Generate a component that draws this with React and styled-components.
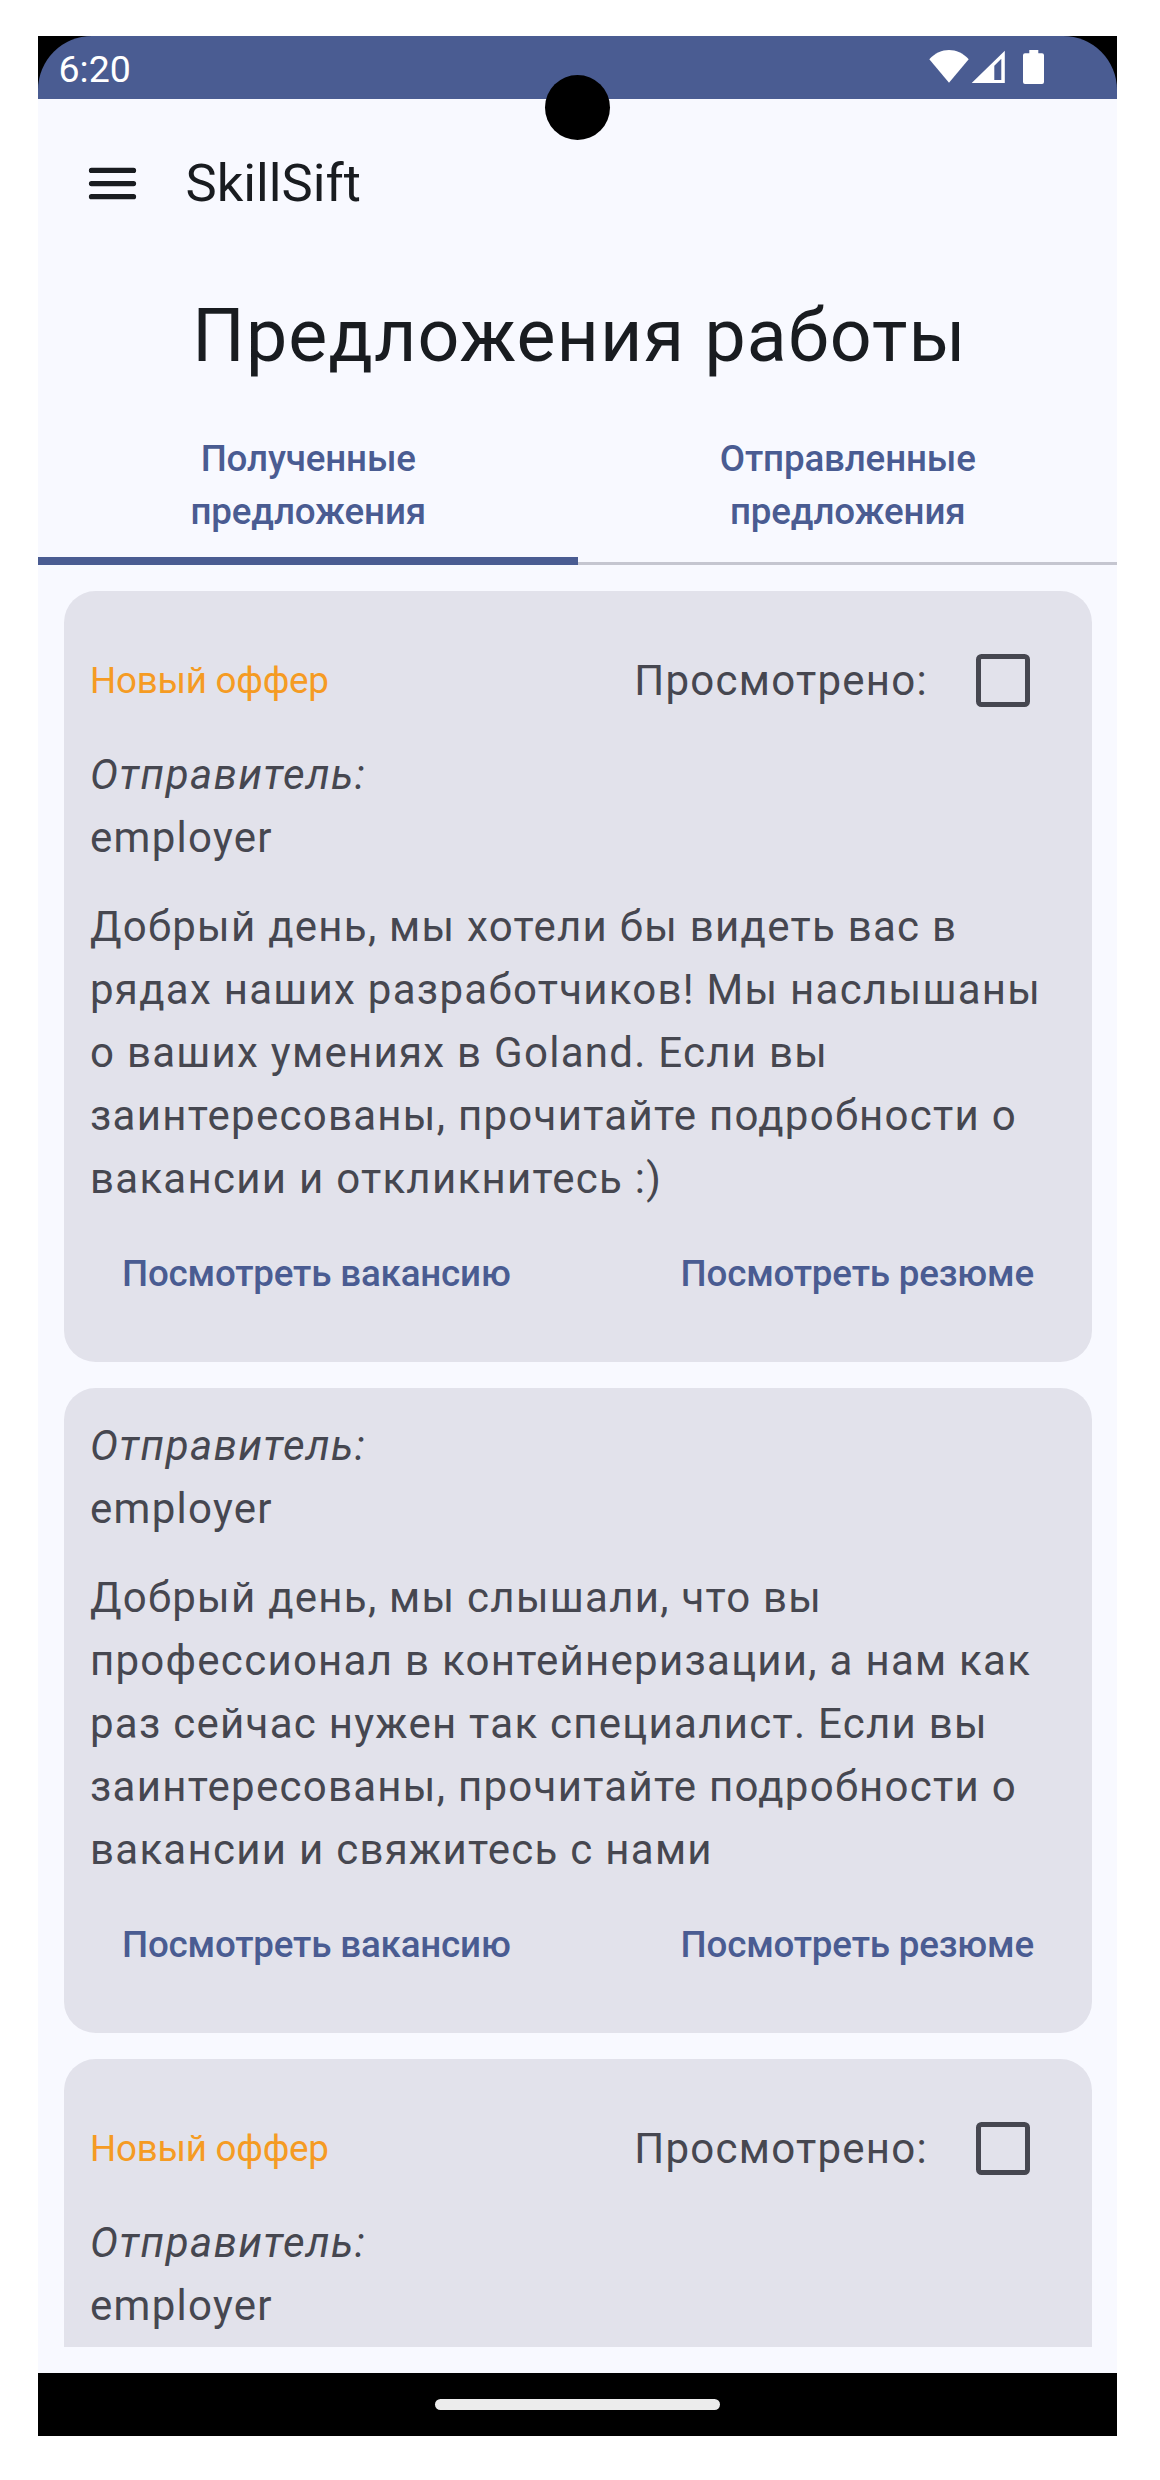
import React, { useState } from "react";
import styled, { createGlobalStyle } from "styled-components";

const GlobalStyle = createGlobalStyle`
  *, *::before, *::after { box-sizing: border-box; }
  body {
    margin: 0;
    background: #fff;
    font-family: Roboto, "Noto Sans", sans-serif;
  }
  button {
    margin: 0;
    padding: 0;
    border: 0;
    background: none;
    font: inherit;
    color: inherit;
  }
`;

const Page = styled.div`
  width: 1160px;
  height: 2480px;
  padding: 36px 0 0 38px;
  overflow: hidden;
`;

const Phone = styled.div`
  position: relative;
  display: flex;
  flex-direction: column;
  width: 1079px;
  height: 2400px;
  background: #f8f9ff;
`;

const StatusCorners = styled.div`
  flex: none;
  height: 63px;
  background: #000;
`;

const StatusBar = styled.div`
  display: flex;
  align-items: center;
  justify-content: space-between;
  height: 63px;
  padding: 3px 71px 0 20.5px;
  border-radius: 54px 54px 0 0;
  background: #4a5c92;
  color: #fff;
`;

const Clock = styled.span`
  font-size: 37.5px;
  line-height: 44px;
`;

const StatusIcons = styled.svg`
  display: block;
  width: 118px;
  height: 36px;
  margin-top: -6px;
`;

const Camera = styled.div`
  position: absolute;
  top: 39px;
  left: 506.5px;
  width: 65px;
  height: 65px;
  border-radius: 50%;
  background: #000;
`;

const AppBar = styled.header`
  flex: none;
  display: flex;
  align-items: center;
  gap: 42px;
  height: 168px;
  padding-left: 42.5px;
  color: #191c20;
`;

const MenuButton = styled.button`
  display: flex;
  width: 63px;
  height: 63px;
`;

const AppTitle = styled.div`
  font-size: 52.5px;
  line-height: 68px;
`;

const Heading = styled.h1`
  flex: none;
  margin: 22px 0 19px;
  padding-left: 4px;
  font-size: 73.5px;
  font-weight: 400;
  line-height: 95px;
  letter-spacing: 1.12px;
  text-align: center;
  color: #191c20;
`;

const Tabs = styled.div`
  flex: none;
  display: grid;
  grid-template-columns: 1fr 1fr;
  height: 162px;
`;

const Tab = styled.button`
  display: flex;
  flex-direction: column;
  justify-content: flex-end;
  font-size: 36.75px;
  font-weight: 500;
  line-height: 53px;
  letter-spacing: -0.16px;
  color: #4a5c92;
  text-align: center;
`;

const TabLabel = styled.span`
  align-self: center;
  width: 300px;
  padding-left: 1px;
  margin-bottom: ${(p) => (p.$active ? 19 : 24)}px;
`;

const TabLine = styled.span`
  height: ${(p) => (p.$active ? 8 : 3)}px;
  background: ${(p) => (p.$active ? "#4a5c92" : "#c5c6d0")};
`;

const OfferList = styled.main`
  flex: 1;
  min-height: 0;
  display: flex;
  flex-direction: column;
  gap: 26px;
  margin: 26px 25px 26px 26px;
  overflow: hidden;
`;

const Card = styled.article`
  flex: none;
  padding: 26px;
  border-radius: 31.5px;
  background: #e2e2eb;
  color: #464750;
  font-size: 42px;
  line-height: 63px;
  letter-spacing: 1.27px;
`;

const CardHeader = styled.div`
  display: flex;
  align-items: center;
  justify-content: space-between;
  height: 126px;
`;

const NewBadge = styled.span`
  font-size: 36.75px;
  letter-spacing: -0.25px;
  color: #f59b23;
`;

const Viewed = styled.label`
  display: flex;
  align-items: center;
  gap: 12px;
`;

const CheckTarget = styled.button`
  display: grid;
  place-items: center;
  width: 126px;
  height: 126px;
`;

const CheckBox = styled.span`
  width: 54px;
  height: 53px;
  border: 5px solid #464750;
  border-radius: 5.5px;
  background: ${(p) => (p.$checked ? "#4a5c92" : "transparent")};
`;

const Sender = styled.p`
  margin: 0 0 26px;
`;

const SenderCaption = styled.span`
  display: block;
  font-style: italic;
  letter-spacing: 1.5px;
`;

const Message = styled.p`
  margin: 0;
`;

const Actions = styled.div`
  display: flex;
  justify-content: space-between;
  height: 126px;
`;

const TextButton = styled.button`
  padding: 0 32px;
  font-size: 36.75px;
  font-weight: 500;
  letter-spacing: -0.18px;
  color: #4a5c92;
`;

const NavBar = styled.footer`
  flex: none;
  display: flex;
  align-items: center;
  justify-content: center;
  height: 63px;
  background: #000;
`;

const HomeHandle = styled.div`
  width: 285px;
  height: 11px;
  border-radius: 5.5px;
  background: #ececec;
`;

const offers = [
  {
    id: 1,
    isNew: true,
    sender: "employer",
    text: "Добрый день, мы хотели бы видеть вас в рядах наших разработчиков! Мы наслышаны о ваших умениях в Goland. Если вы заинтересованы, прочитайте подробности о вакансии и откликнитесь :)",
  },
  {
    id: 2,
    isNew: false,
    sender: "employer",
    text: "Добрый день, мы слышали, что вы профессионал в контейнеризации, а нам как раз сейчас нужен так специалист. Если вы заинтересованы, прочитайте подробности о вакансии и свяжитесь с нами",
  },
  { id: 3, isNew: true, sender: "employer", text: "" },
];

const tabs = ["Полученные предложения", "Отправленные предложения"];

function Offer({ offer }) {
  const [checked, setChecked] = useState(false);
  return (
    <Card>
      {offer.isNew && (
        <CardHeader>
          <NewBadge>Новый оффер</NewBadge>
          <Viewed>
            Просмотрено:
            <CheckTarget onClick={() => setChecked(!checked)}>
              <CheckBox $checked={checked} />
            </CheckTarget>
          </Viewed>
        </CardHeader>
      )}
      <Sender>
        <SenderCaption>Отправитель:</SenderCaption>
        {offer.sender}
      </Sender>
      {offer.text && (
        <>
          <Message>{offer.text}</Message>
          <Actions>
            <TextButton>Посмотреть вакансию</TextButton>
            <TextButton>Посмотреть резюме</TextButton>
          </Actions>
        </>
      )}
      {!offer.text && <Actions />}
    </Card>
  );
}

export default function App() {
  const [active, setActive] = useState(0);
  return (
    <Page>
      <GlobalStyle />
      <Phone>
        <StatusCorners>
          <StatusBar>
            <Clock>6:20</Clock>
            <StatusIcons viewBox="0 0 118 36" fill="#fff">
              <path d="M21 34.7 1.300 11.300C7 5 14 2 21 2S35 5 40.700 11.300Z" />
              <path fillRule="evenodd" d="M43.700 35 76.800 2.700V35ZM66.300 17.700V32h7V10.700Z" />
              <path d="M101.300 2h9v3.300h3.700q2 0 2 2V34q0 2-2 2H97q-2 0-2-2V7.300q0-2 2-2h4.300Z" />
            </StatusIcons>
          </StatusBar>
        </StatusCorners>
        <AppBar>
          <MenuButton aria-label="Меню">
            <svg width="63" height="63" viewBox="0 0 24 24" stroke="#191c20" strokeWidth="2" strokeLinecap="round">
              <path d="M4 7h16M4 12h16M4 17h16" />
            </svg>
          </MenuButton>
          <AppTitle>SkillSift</AppTitle>
        </AppBar>
        <Heading>Предложения работы</Heading>
        <Tabs>
          {tabs.map((label, i) => (
            <Tab key={label} onClick={() => setActive(i)}>
              <TabLabel $active={i === active}>{label}</TabLabel>
              <TabLine $active={i === active} />
            </Tab>
          ))}
        </Tabs>
        <OfferList>
          {offers.map((offer) => (
            <Offer key={offer.id} offer={offer} />
          ))}
        </OfferList>
        <NavBar>
          <HomeHandle />
        </NavBar>
        <Camera />
      </Phone>
    </Page>
  );
}
